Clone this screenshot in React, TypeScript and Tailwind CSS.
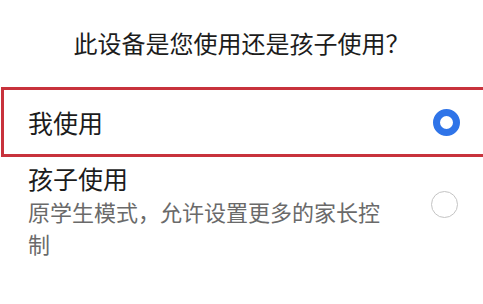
const font = { fontFamily: '"Noto Sans CJK SC", "Noto Sans", sans-serif' };

const SelectedRadio = () => (
  <span className="box-border block h-[27px] w-[27px] shrink-0 rounded-full border-[7px] border-[#2f74e8] bg-white" />
);

const EmptyRadio = () => (
  <span className="box-border block h-[27px] w-[27px] shrink-0 rounded-full border-[1.5px] border-[#c4c4c4] bg-white" />
);

export default function App() {
  return (
    <div
      className="h-[304px] w-[483px] overflow-hidden bg-white [font-family:'Noto_Sans_CJK_SC','Noto_Sans',sans-serif]"
      style={font}
    >
      <h1 className="pt-[31px] text-center text-[24px] font-normal leading-none text-[#1c1c1c]">
        此设备是您使用还是孩子使用？
      </h1>

      <div className="ml-[1px] mt-[32px] box-border flex h-[70px] w-[500px] items-center border-[3px] border-[#c8323c] pl-[24px] pr-[0px]">
        <span className="w-[405px] text-[25px] leading-none text-[#1c1c1c]">我使用</span>
        <SelectedRadio />
      </div>

      <div className="flex items-start pt-[9px]">
        <div className="w-[403px] pl-[28px]">
          <div className="text-[25px] leading-none text-[#1c1c1c]">孩子使用</div>
          <p className="mt-[4px] w-[365px] text-[22px] leading-[32px] text-[#6a6a6a]">
            原学生模式，允许设置更多的家长控制
          </p>
        </div>
        <div className="ml-[28px] mt-[25px]">
          <EmptyRadio />
        </div>
      </div>
    </div>
  );
}
